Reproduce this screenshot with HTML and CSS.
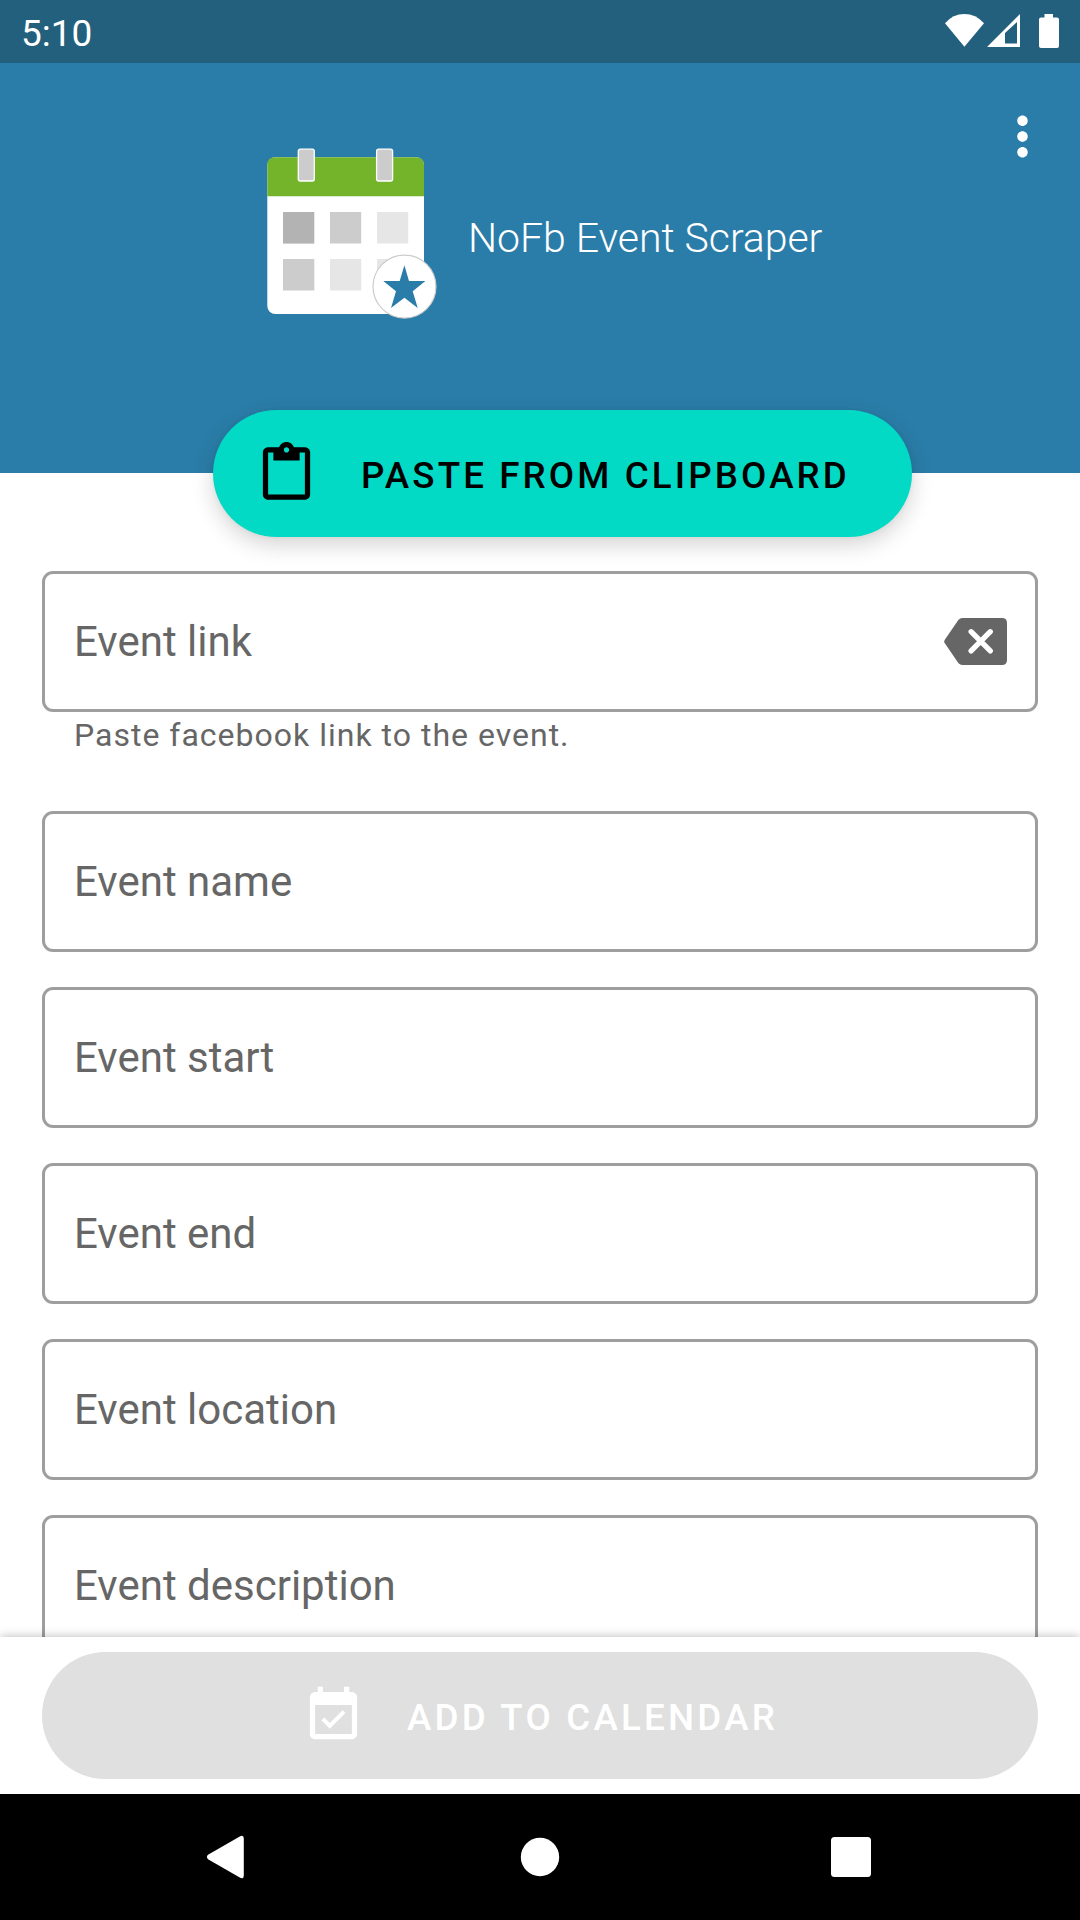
FILE: index.html
```html
<!DOCTYPE html>
<html lang="en">
<head>
<meta charset="utf-8">
<title>NoFb Event Scraper</title>
<link rel="stylesheet" href="styles.css">
</head>
<body>
<div class="screen">
  <div class="status-bar">
    <span class="clock">5:10</span>
    <svg class="status-icons" viewBox="0 0 120 40" aria-hidden="true">
      <path d="M5 13.2Q13 4 24.4 4T44 13.2L24.4 36.7z"/>
      <path fill-rule="evenodd" d="M47 37L80 4v33zM65 23v10.5h12V12z"/>
      <path d="M104.500 4h8.500v3.500h4q2 0 2 2v26.500q0 2-2 2h-16q-2 0-2-2V9.500q0-2 2-2h3.500z"/>
    </svg>
  </div>

  <header class="header">
    <div class="brand">
      <svg class="logo" viewBox="0 0 170 172" aria-hidden="true">
        <rect class="page" x=".3" y="9.200" width="156.700" height="156.800" rx="8"/>
        <path class="band" d="M.3 48.300V17.200q0-8 8-8h140.700q8 0 8 8v31.100z"/>
        <g class="ring">
          <rect x="31.300" y="1.200" width="16" height="31.800" rx="2"/>
          <rect x="109.600" y="1.200" width="16" height="31.800" rx="2"/>
        </g>
        <path fill="#b3b3b3" d="M16 64h31.300v31.600H16z"/>
        <path fill="#ccc" d="M63 64h31.200v31.600H63zM16 111h31.300v31.600H16z"/>
        <path fill="#e6e6e6" d="M110 64h31.200v31.600H110zM63 111h31.200v31.600H63zM110 111h31.200v31.600H110z"/>
        <circle class="badge" cx="137.500" cy="138.600" r="31.500"/>
        <path class="star" d="M137.400 117.300l4.600 15.700h16.400l-12.700 10.300 5 16.700-13.300-10.300-13.400 10.300 5-16.700L116.300 133h16.400z"/>
      </svg>
      <h1 class="title">NoFb Event Scraper</h1>
    </div>
    <svg class="menu" viewBox="0 0 24 24" aria-hidden="true">
      <path d="M12 8c1.100 0 2-.9 2-2s-.9-2-2-2-2 .9-2 2 .9 2 2 2zm0 2c-1.100 0-2 .9-2 2s.9 2 2 2 2-.9 2-2-.9-2-2-2zm0 6c-1.100 0-2 .9-2 2s.9 2 2 2 2-.9 2-2-.9-2-2-2z"/>
    </svg>
  </header>

  <button class="pill paste">
    <svg class="icon" viewBox="0 0 24 24" aria-hidden="true"><path d="M19 2h-4.180C14.400.84 13.300 0 12 0c-1.300 0-2.400.84-2.820 2H5c-1.100 0-2 .9-2 2v16c0 1.100.9 2 2 2h14c1.100 0 2-.9 2-2V4c0-1.100-.9-2-2-2zm-7 0c.55 0 1 .45 1 1s-.45 1-1 1-1-.45-1-1 .45-1 1-1zm7 18H5V4h2v3h10V4h2v16z"/></svg>
    <span class="label">PASTE FROM CLIPBOARD</span>
  </button>

  <main class="form">
    <div class="field">
      <span>Event link</span>
      <svg class="clear" viewBox="0 0 63 63" aria-hidden="true">
        <path d="M.8 29.700L14.500 9.800Q16 8 18.500 8H58q5 0 5 5v37q0 5-5 5H18.500q-2.500 0-4-1.800L.8 33.300q-1.200-1.800 0-3.600z"/>
        <path class="cross" d="M27.100 21.700l19.200 19.200m0-19.200L27.100 40.900"/>
      </svg>
    </div>
    <p class="helper">Paste facebook link to the event.</p>
    <div class="field">Event name</div>
    <div class="field">Event start</div>
    <div class="field">Event end</div>
    <div class="field">Event location</div>
    <div class="field">Event description</div>
  </main>

  <footer class="actions">
    <button class="pill add" disabled>
      <svg class="icon" viewBox="0 0 24 24" aria-hidden="true"><path d="M16.530 11.060L15.470 10l-4.880 4.880-2.120-2.120-1.060 1.060L10.590 17l5.940-5.940zM19 3h-1V1h-2v2H8V1H6v2H5c-1.110 0-1.990.9-1.990 2L3 19c0 1.100.89 2 2 2h14c1.100 0 2-.9 2-2V5c0-1.100-.9-2-2-2zm0 16H5V8h14v11z"/></svg>
      <span class="label">ADD TO CALENDAR</span>
    </button>
  </footer>

  <nav class="nav-bar">
    <svg viewBox="0 0 64 64" aria-hidden="true"><path d="M11 29.800L43.200 11.200Q46.800 9.800 46.800 13.500v37q0 3.700-3.600 2.300L11 34.200q-2.200-2.200 0-4.400z"/></svg>
    <svg viewBox="0 0 64 64" aria-hidden="true"><circle cx="32" cy="32" r="19.200"/></svg>
    <svg viewBox="0 0 64 64" aria-hidden="true"><rect x="12" y="12" width="40" height="40" rx="3.500"/></svg>
  </nav>
</div>
</body>
</html>
```
FILE: styles.css
```css
* {
  box-sizing: border-box;
}

body {
  margin: 0;
  font-family: Roboto, "Liberation Sans", sans-serif;
  background: #fff;
}

.screen {
  display: flex;
  flex-direction: column;
  width: 1080px;
  height: 1920px;
  overflow: hidden;
}

.status-bar {
  display: flex;
  justify-content: space-between;
  flex: none;
  height: 63px;
  padding: 10px 20px 0 21px;
  background: #23607d;
  color: #fff;
}

.clock {
  font-size: 37px;
  line-height: 48px;
}

.status-icons {
  width: 120px;
  height: 40px;
  fill: #fff;
}

.header {
  display: flex;
  justify-content: space-between;
  flex: none;
  height: 410px;
  padding: 42px 26px 0 267px;
  background: #2a7da8;
  color: #fff;
}

.brand {
  display: flex;
  align-items: center;
  gap: 31px;
  height: 172px;
  margin-top: 43px;
}

.logo {
  width: 170px;
  height: 172px;
}

.page {
  fill: #fff;
}

.band {
  fill: #74b42b;
}

.ring {
  fill: #ccc;
  stroke: #fff;
  stroke-width: 1.3px;
}

.badge {
  fill: #fff;
  stroke: #ccc;
  stroke-width: 1.2px;
}

.star {
  fill: #2a7da8;
}

.title {
  margin: 0;
  padding-top: 7px;
  font-size: 41px;
  font-weight: 300;
  line-height: 50px;
  letter-spacing: -.05px;
  white-space: nowrap;
}

.menu {
  width: 63px;
  height: 63px;
  fill: #fff;
}

.pill {
  display: flex;
  align-items: center;
  flex: none;
  height: 127px;
  border: 0;
  border-radius: 64px;
  font: 500 36.75px/44px Roboto, "Liberation Sans", sans-serif;
  letter-spacing: 3.1px;
  white-space: nowrap;
}

.label {
  padding-top: 4px;
}

.icon {
  flex: none;
  width: 63px;
  height: 63px;
  fill: currentColor;
}

.paste {
  z-index: 1;
  gap: 43px;
  width: 699px;
  margin: -63px 0 0 213px;
  padding: 0 0 0 42px;
  background: #03dac5;
  color: #000;
  box-shadow: 0 8px 22px rgba(0, 0, 0, .17), 0 0 5px rgba(0, 0, 0, .05);
}

.form {
  display: flex;
  flex: 1;
  flex-direction: column;
  gap: 35px;
  min-height: 0;
  padding: 34px 42px 0;
  overflow: hidden;
  color: #666;
}

.field {
  display: flex;
  align-items: center;
  justify-content: space-between;
  flex: none;
  height: 141px;
  padding: 0 28px 0 29px;
  border: 3px solid #9e9e9e;
  border-radius: 11px;
  font-size: 42px;
  line-height: 50px;
}

.clear {
  width: 63px;
  height: 63px;
  fill: #666;
}

.cross {
  fill: none;
  stroke: #fff;
  stroke-width: 5.3px;
  stroke-linecap: round;
}

.helper {
  flex: none;
  height: 64px;
  margin: -35px 0 0;
  padding: 3px 32px 0;
  font-size: 32px;
  line-height: 40px;
  letter-spacing: 1px;
}

.actions {
  z-index: 1;
  flex: none;
  height: 157px;
  padding: 15px 42px;
  background: #fff;
  box-shadow: 0 -1px 9px rgba(0, 0, 0, .24);
}

.add {
  justify-content: center;
  gap: 42px;
  width: 996px;
  padding: 0;
  background: #e0e0e0;
  color: #fff;
  letter-spacing: 3.2px;
}

.nav-bar {
  display: flex;
  align-items: center;
  justify-content: space-between;
  flex: none;
  height: 126px;
  padding: 0 197px;
  background: #000;
}

.nav-bar svg {
  width: 64px;
  height: 64px;
  fill: #fff;
}
```
